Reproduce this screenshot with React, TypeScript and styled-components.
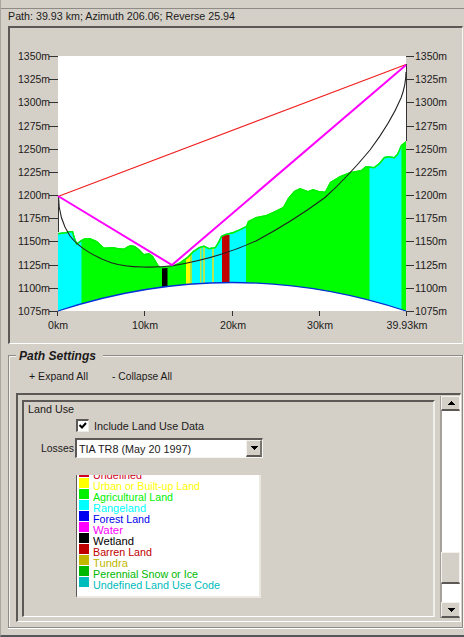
import React from "react";
import styled, { createGlobalStyle } from "styled-components";

const Global = createGlobalStyle`
  * { box-sizing: border-box; }
  body { margin: 0; background: #d4d0c8; overflow: hidden; }
`;

const face = "#d4d0c8";
const dark = "#5c5855";
const shade = "#8e8a86";

const Window = styled.main`
  width: 464px;
  height: 637px;
  overflow: hidden;
  display: flex;
  flex-direction: column;
  background: ${face};
  border-left: 1px solid #aaa69f;
  border-bottom: 2px solid #55565a;
  font: 11.5px/14px "Liberation Sans", Arial, sans-serif;
  color: #1c1a19;
  white-space: nowrap;
`;

const Header = styled.header`
  margin-top: 8px;
  height: 19px;
  flex: none;
  border-top: 1px solid ${shade};
  padding-left: 7px;
`;

const Label = styled.span<{ $w: number }>`
  display: block;
  width: ${(p) => p.$w}px;
  height: 14px;
  flex: none;
  svg { display: block; overflow: visible; }
`;

const ChartPanel = styled.section`
  flex: none;
  margin: -1px 0 0 7px;
  width: 455px;
  height: 318px;
  border: solid;
  border-width: 2px 1px 1px 2px;
  border-color: ${dark} #f6f4ee #fff ${dark};
`;

const Chart = styled.svg`
  display: block;
  width: 452px;
  height: 314px;
`;

const GroupBox = styled.section`
  flex: none;
  margin: 11px 0 0 7px;
  width: 455px;
  height: 273px;
  border: 1px solid ${shade};
  box-shadow: 0 1px #fff, 1px 0 #f4f2ec, inset 1px 1px #f4f2ec;
  display: flex;
  flex-direction: column;
`;

const GroupTitle = styled.h2`
  margin: -8px 0 0 7px;
  padding: 1px 4px 0 3px;
  width: 87px;
  height: 16px;
  background: ${face};
  font: italic bold 12px/15px "Liberation Sans", Arial, sans-serif;
`;

const Commands = styled.nav`
  display: flex;
  gap: 24px;
  margin: 5px 0 0 20px;
  height: 24px;
`;

const Scroller = styled.div`
  margin-left: 7px;
  width: 445px;
  height: 229px;
  border: solid;
  border-width: 2px 1px 1px 2px;
  border-color: ${dark} #fff #fff ${dark};
  display: flex;
  justify-content: space-between;
`;

const Sheet = styled.section`
  margin: 5px 0 0 4px;
  width: 413px;
  height: 217px;
  border: solid;
  border-width: 2px 2px 1px 2px;
  border-color: ${dark} #f0eee8 #fff ${dark};
  padding-left: 4px;
  overflow: hidden;
`;

const CheckLine = styled.label`
  display: flex;
  gap: 5px;
  margin: 3px 0 0 48px;
  height: 15px;
`;

const Check = styled.span`
  width: 13px;
  height: 13px;
  background: #fff;
  border: solid;
  border-width: 2px 1px 1px 2px;
  border-color: ${dark} #eeece6 #eeece6 ${dark};
  svg { display: block; }
`;

const LossLine = styled.div`
  display: flex;
  align-items: center;
  margin: 4px 0 0 13px;
  height: 20px;
  gap: 1px;
`;

const Combo = styled.div`
  width: 188px;
  height: 20px;
  background: #fff;
  border: solid;
  border-width: 2px 1px 1px 2px;
  border-color: ${dark} #f8f6f0 #f8f6f0 ${dark};
  display: flex;
  justify-content: space-between;
  padding: 0 0 0 2px;
  > span { margin-top: 2px; }
`;

const ArrowButton = styled.button<{ $w: number; $h: number }>`
  width: ${(p) => p.$w}px;
  height: ${(p) => p.$h}px;
  flex: none;
  padding: 0;
  border: solid;
  border-width: 1px 2px 2px 1px;
  border-color: #f3f1eb #77736e ${dark} #f3f1eb;
  background: ${face};
  display: grid;
  place-items: center;
  svg { display: block; }
`;

const ScrollButton = styled(ArrowButton)`
  border-right: 1px solid #f3f1eb;
`;

const Legend = styled.ul`
  list-style: none;
  margin: 17px 0 0 48px;
  padding: 0 0 0 2px;
  width: 185px;
  height: 123px;
  overflow: hidden;
  background: #fff;
  border: solid;
  border-width: 0 2px 2px 1px;
  border-color: #fff #ebe9e2 #ebe9e2 ${dark};
  display: flex;
  flex-direction: column;
`;

const LegendItem = styled.li<{ $c: string }>`
  flex: none;
  display: flex;
  gap: 4px;
  height: 11px;
  color: ${(p) => p.$c};
  &:first-child { margin-top: -8px; }
  > span:last-child { margin-top: 1px; }
`;

const Swatch = styled.span`
  width: 10px;
  height: 10px;
  background: currentColor;
`;

const Scrollbar = styled.div`
  display: flex;
  flex-direction: column;
  width: 20px;
  height: 222px;
  margin-top: 1px;
  background: #fff;
  border-left: 1px solid #a5a19a;
`;

const Track = styled.div<{ $h: number }>`
  height: ${(p) => p.$h}px;
  border-left: 1px solid #a5a19a;
`;

const Thumb = styled.div`
  height: 32px;
  background: ${face};
  border: solid;
  border-width: 1px 1px 2px 1px;
  border-color: #f3f1eb #f3f1eb ${dark} #f3f1eb;
`;

function Text({ w, children }: { w: number; children: string }) {
  return (
    <Label $w={w}>
      <svg width={w} height="14">
        <text x="0" y="11" fill="currentColor" textLength={w} lengthAdjust="spacingAndGlyphs">{children}</text>
      </svg>
    </Label>
  );
}

function Arrow({ up }: { up?: boolean }) {
  return (
    <svg width="8" height="4" shapeRendering="crispEdges">
      <path d={up ? "M0 4L4 0L8 4Z" : "M0 0H8L4 4Z"} fill="#000" />
    </svg>
  );
}

const heights = [1350, 1325, 1300, 1275, 1250, 1225, 1200, 1175, 1150, 1125, 1100, 1075];
const distances: [number, string, number][] = [
  [58, "0km", 20], [145, "10km", 26], [233, "20km", 26], [320, "30km", 26], [407, "39.93km", 41],
];
const ridge =
  "58,233 66,232 69,231 73,231 75,238 77,243 81,240 85,238 90,238 97,241 104,247.5 113,247 118,248 124,248.5 128,246 131,245 135,246 139,249 144,254 149,253 153,256 156,261 159,266 161,267 172,266 180,262 187,257 193,251 199,247 204,245.5 209,248 215,247 218,242 221,236 225,234 233,232 240,229 246,226 248,221 256,217 266,215 275,211 283,207 288,198 294,191 300,188 308,191 313,189 319,191 325,191.5 330,182 340,176 350,172 361,170 366,166 374,167 379,163 384,157 388,156 394,157 397,154 401,145 406,141";
const bands: [number, number, string][] = [
  [58, 81.5, "#00ffff"], [186, 190, "#ffff00"], [190, 192, "#a8e83c"], [192, 246, "#00ffff"],
  [200, 201.5, "#b8e850"], [203, 205, "#b8e850"], [212, 214, "#b8e850"],
  [369.5, 401.5, "#00ffff"],
];

function Profile() {
  return (
    <Chart viewBox="10 28 452 314">
      <defs>
        <clipPath id="ground">
          <path d={`M${ridge} L406,311 Q232,254 58,311Z`} />
        </clipPath>
      </defs>
      <rect x="58" y="56" width="348" height="255" fill="#fff" />
      <g clipPath="url(#ground)">
        <rect x="58" y="56" width="348" height="255" fill="#00ff00" />
        {bands.map(([a, b, c]) => (
          <rect key={a} x={a} y="130" width={b - a} height="181" fill={c} />
        ))}
        <rect x="162" y="268" width="5.5" height="30" fill="#000" />
        <rect x="222" y="235" width="7.5" height="60" fill="#c00000" />
        <polyline points={ridge} fill="none" stroke="#00f000" strokeWidth="3" />
      </g>
      <path d="M58 311Q232 254 406 311" fill="none" stroke="#0030d8" strokeWidth="1.3" />
      <path
        d="M58.5 196C58.5 210 62 224 70 236C79 248 97 258 112 263C128 268 156 268 174 265.5C200 261 232 252 256 241C282 227 304 213 325 197.5C340 184 355 168 370 150C382 134 393 117 401 98C404 90 406 82 406 72"
        fill="none" stroke="#222" strokeWidth="1.1"
      />
      <path d="M58.5 196V232M406.5 64V141" stroke="#333" />
      <path d="M58 196.5L406 64.5" stroke="#f02020" strokeWidth="1.1" />
      <path d="M58 196L172 265L406 65" fill="none" stroke="#ff00ff" strokeWidth="2" />
      {heights.map((h, i) => {
        const y = Math.round(56 + i * 23.18);
        return (
          <g key={h} fill="#1c1a19">
            <path d={`M49 ${y + 0.5}H58M406 ${y + 0.5}H414`} stroke="#333" />
            <text x="18" y={y + 4} textLength="32" lengthAdjust="spacingAndGlyphs">{`${h}m`}</text>
            <text x="415" y={y + 4} textLength="32" lengthAdjust="spacingAndGlyphs">{`${h}m`}</text>
          </g>
        );
      })}
      {distances.map(([x, t, w]) => (
        <g key={t} fill="#1c1a19">
          <path d={`M${x - 0.5} 311V316`} stroke="#333" />
          <text x={x - w / 2} y="329" textLength={w} lengthAdjust="spacingAndGlyphs">{t}</text>
        </g>
      ))}
    </Chart>
  );
}

const landUses: [string, string, number][] = [
  ["Undefined", "#d00020", 49], ["Urban or Built-up Land", "#ffff00", 107], ["Agricultural Land", "#00f000", 80],
  ["Rangeland", "#00ffff", 53], ["Forest Land", "#0000f0", 57], ["Water", "#ff00ff", 30], ["Wetland", "#000000", 41],
  ["Barren Land", "#c00000", 59], ["Tundra", "#c0b800", 35], ["Perennial Snow or Ice", "#00b800", 105],
  ["Undefined Land Use Code", "#00bcbc", 127],
];

export default function App() {
  return (
    <Window>
      <Global />
      <Header><Text w={227}>Path: 39.93 km; Azimuth 206.06; Reverse 25.94</Text></Header>
      <ChartPanel><Profile /></ChartPanel>
      <GroupBox>
        <GroupTitle><Text w={77}>Path Settings</Text></GroupTitle>
        <Commands>
          <Text w={59}>+ Expand All</Text>
          <Text w={60}>- Collapse All</Text>
        </Commands>
        <Scroller>
          <Sheet>
            <Text w={46}>Land Use</Text>
            <CheckLine>
              <Check>
                <svg width="10" height="10"><path d="M1.5 4L4 6.5L8 2" fill="none" stroke="#000" strokeWidth="2" /></svg>
              </Check>
              <Text w={110}>Include Land Use Data</Text>
            </CheckLine>
            <LossLine>
              <Text w={33}>Losses</Text>
              <Combo>
                <Text w={112}>TIA TR8 (May 20 1997)</Text>
                <ArrowButton $w={16} $h={17} aria-label="Open losses"><Arrow /></ArrowButton>
              </Combo>
            </LossLine>
            <Legend>
              {landUses.map(([name, color, w]) => (
                <LegendItem key={name} $c={color}><Swatch /><Text w={w}>{name}</Text></LegendItem>
              ))}
            </Legend>
          </Sheet>
          <Scrollbar>
            <ScrollButton $w={19} $h={15} aria-label="Scroll up"><Arrow up /></ScrollButton>
            <Track $h={141} />
            <Thumb />
            <Track $h={18} />
            <ScrollButton $w={19} $h={16} aria-label="Scroll down"><Arrow /></ScrollButton>
          </Scrollbar>
        </Scroller>
      </GroupBox>
    </Window>
  );
}
